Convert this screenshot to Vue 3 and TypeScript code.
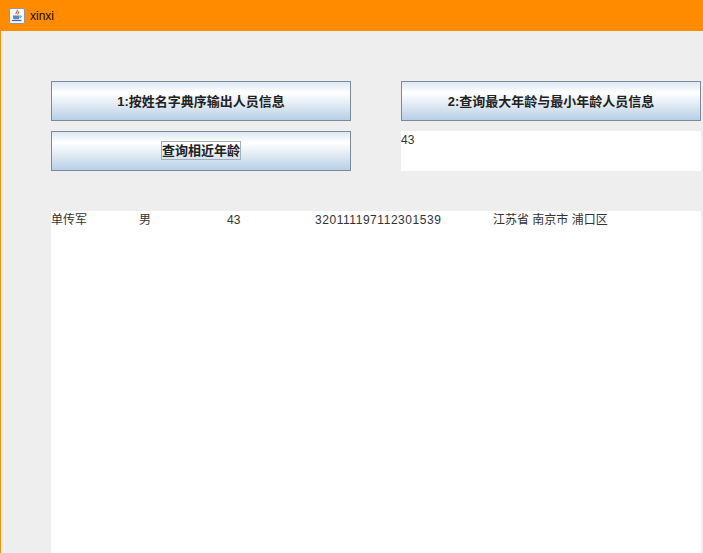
<script setup lang="ts">
const row = [
  { text: '单传军', width: 88, numeric: false },
  { text: '男', width: 88, numeric: false },
  { text: '43', width: 88, numeric: false },
  { text: '320111197112301539', width: 178, numeric: true },
  { text: '江苏省 南京市 浦口区', width: 160, numeric: false },
]
</script>

<template>
  <div class="window">
    <header class="titlebar">
      <svg class="app-icon" width="16" height="16" viewBox="0 0 16 16">
        <rect x="0.5" y="0.5" width="15" height="15" rx="1.5" fill="#f6f8fb" stroke="#8d97a8" />
        <path d="M8 2c1.5 1.5-1.5 2.5-1 4M9.5 3.5c.6 1.2-1 1.8-.6 3" fill="none" stroke="#e2512a" stroke-width="1.1" />
        <path d="M4 7.5h6.5v2.2c0 1-1 1.6-2 1.6H6c-1 0-2-.6-2-1.6z" fill="#5f86c4" />
        <path d="M10.5 8h1.3c.9 0 .9 1.6-.8 1.7" fill="none" stroke="#5f86c4" />
        <path d="M3 12.5h9.5" stroke="#3f68ad" stroke-width="1.2" />
      </svg>
      <span class="title">xinxi</span>
    </header>
    <main class="content">
      <div class="controls">
        <button class="action" type="button">1:按姓名字典序输出人员信息</button>
        <button class="action" type="button">2:查询最大年龄与最小年龄人员信息</button>
        <button class="action" type="button"><span class="focused">查询相近年龄</span></button>
        <div class="result">43</div>
      </div>
      <section class="list">
        <span
          v-for="cell in row"
          :key="cell.text"
          class="cell"
          :class="{ numeric: cell.numeric }"
          :style="{ width: cell.width + 'px' }"
        >{{ cell.text }}</span>
      </section>
    </main>
  </div>
</template>

<style>
html, body { margin: 0; overflow: hidden; }
</style>

<style scoped>
.window {
  width: 703px;
  height: 553px;
  display: flex;
  flex-direction: column;
  background: #eeeeee;
  font-family: "Liberation Sans", "Noto Sans CJK SC", sans-serif;
  overflow: hidden;
}
.titlebar {
  height: 31px;
  flex: none;
  display: flex;
  align-items: center;
  gap: 5px;
  padding: 0 0 0 9px;
  box-sizing: border-box;
  background: #ff8c00;
}
.app-icon { flex: none; }
.title {
  font-size: 12px;
  color: #1a0d00;
}
.content {
  flex: 1;
  min-height: 0;
  display: flex;
  flex-direction: column;
  gap: 40px;
  padding: 50px 2px 0 51px;
  border-left: 1px solid #ff8c00;
  box-shadow: inset 1px 0 #f8f8f8;
  box-sizing: border-box;
}
.controls {
  display: grid;
  grid-template-columns: 300px 300px;
  grid-auto-rows: 40px;
  column-gap: 50px;
  row-gap: 10px;
  margin-left: -1px;
}
.action {
  margin: 0;
  padding: 0 0 2px;
  border: 1px solid #7a8a99;
  background: linear-gradient(180deg, #dde8f3 0%, #ffffff 28%, #e6eef6 55%, #b8cfe5 100%);
  font-family: inherit;
  font-size: 13px;
  font-weight: 700;
  color: #222;
}
.focused {
  display: inline-block;
  line-height: 17px;
  border: 1px solid #a3aebb;
}
.result {
  background: #fff;
  font-size: 12px;
  line-height: 18px;
  color: #333;
}
.list {
  flex: 1;
  display: flex;
  align-items: flex-start;
  background: #fff;
  font-size: 12px;
  line-height: 18px;
  color: #333;
  margin-left: -1px;
}
.cell {
  flex: none;
  white-space: nowrap;
}
.numeric {
  letter-spacing: 0.55px;
}
</style>
